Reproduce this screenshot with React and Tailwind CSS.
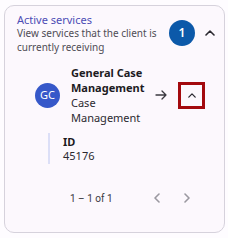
import React from "react";

function Chevron({ className, dir = "up" }) {
  const d = {
    up: "M1 5L5 1L9 5",
    left: "M5 1L1 5L5 9",
    right: "M1 1L5 5L1 9",
  }[dir];
  const vb = dir === "up" ? "0 0 10 6" : "0 0 6 10";
  return (
    <svg viewBox={vb} className={className} fill="none" stroke="currentColor" strokeWidth="1.6" strokeLinecap="round" strokeLinejoin="round">
      <path d={d} />
    </svg>
  );
}

export default function App() {
  return (
    <div className="w-[228px] h-[238px] bg-[#fefcff] pt-[5px] pl-[4px]" style={{ fontFamily: '"Noto Sans", sans-serif' }}>
      <div className="w-[221px] h-[228px] rounded-[10px] border border-[#d6d2dc] bg-[#fcf8fd] flex flex-col">
        {/* Header */}
        <div className="flex items-start pl-[12px] pt-[7px]">
          <div className="w-[146px]">
            <div className="text-[11px] leading-[14px] text-[#4c4db5]">Active services</div>
            <div className="text-[10px] leading-[13.5px] text-[#4f4d55]">
              View services that the client is currently receiving
            </div>
          </div>
          <div className="flex items-center mt-[7px] ml-[6px]">
            <div className="w-[26px] h-[26px] rounded-full bg-[#0c59a9] text-white text-[12px] font-semibold flex items-center justify-center">
              1
            </div>
            <Chevron className="w-[10px] h-[6px] ml-[10px] text-[#2b2930]" />
          </div>
        </div>

        {/* Service row */}
        <div className="flex items-center mt-[11px] pl-[30px]">
          <div className="w-[25px] h-[25px] rounded-full bg-[#3658c9] text-white text-[11px] flex items-center justify-center shrink-0">
            GC
          </div>
          <div className="ml-[11px] w-[80px]">
            <div className="text-[11px] leading-[15px] font-bold text-[#1c1b1f]">General Case Management</div>
            <div className="text-[11px] leading-[15px] text-[#2b2930]">Case Management</div>
          </div>
          <svg viewBox="0 0 12 10" className="w-[12px] h-[10px] ml-[4px] text-[#3a383f]" fill="none" stroke="currentColor" strokeWidth="1.3" strokeLinecap="round" strokeLinejoin="round">
            <path d="M1 5H11M7 1L11 5L7 9" />
          </svg>
          <div className="ml-[11px] w-[27px] h-[27px] border-[3px] border-[#a30a0e] flex items-center justify-center">
            <Chevron className="w-[8px] h-[5px] text-[#2b2930]" />
          </div>
        </div>

        {/* Details */}
        <div className="ml-[43px] mt-[8px] w-fit border-l-[2px] border-[#dcdff7] pl-[13px] py-[2px]">
          <div className="text-[11px] leading-[13.5px] font-bold text-[#1c1b1f]">ID</div>
          <div className="text-[11px] leading-[13.5px] text-[#2b2930]">45176</div>
        </div>

        {/* Pagination */}
        <div className="flex items-center h-[20px] mt-[24px] pl-[65px] text-[10px] text-[#3a383f]" style={{ fontFamily: "Roboto, sans-serif" }}>
          <span>1 – 1 of 1</span>
          <Chevron dir="left" className="w-[6px] h-[10px] ml-[41px] text-[#9a98a0]" />
          <Chevron dir="right" className="w-[6px] h-[10px] ml-[24px] text-[#9a98a0]" />
        </div>
      </div>
    </div>
  );
}
